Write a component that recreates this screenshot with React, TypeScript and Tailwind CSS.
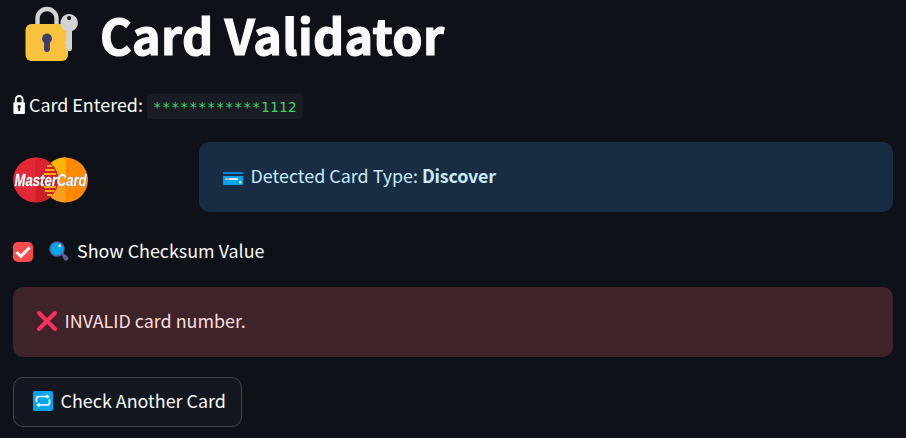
import React from "react";

const LockWithKey = () => (
  <svg width="54" height="57" viewBox="0 0 54 57" className="block shrink-0">
    <path d="M12.500 20V12.500a9.500 9.500 0 0 1 19 0v7.500" fill="none" stroke="#d3d3d3" strokeWidth="4.400" />
    <rect x=".5" y="18" width="42.500" height="37" rx="6" fill="#f9c23c" />
    <path d="M22 27.500a5 5 0 0 1 2.900 9v6.600a2.900 2.900 0 0 1-5.800 0v-6.600a5 5 0 0 1 2.900-9Z" fill="#433b6b" />
    <path
      fillRule="evenodd"
      d="M44.200 8a8.800 8.800 0 0 1 2.800 17.100V43a2.600 2.600 0 0 1-2.600 2.200c-.9 0-1.600-.4-2.200-1.100l-1.300-1.500c-.8-1-.6-1.800.4-2.800.5-.5.5-1 0-1.500l-.9-.9c-.6-.7-.6-1.500 0-2.100l.9-1.200v-9A8.800 8.800 0 0 1 44.200 8Zm0 2a2.100 2.100 0 1 0 0 4.200 2.100 2.100 0 0 0 0-4.200Z"
      fill="#d3d3d3"
    />
  </svg>
);

const SmallLock = () => (
  <svg width="13" height="20" viewBox="0 0 13 20" className="block shrink-0">
    <path d="M2.800 9V4.500a3.400 3.500 0 0 1 6.800 0V9" fill="none" stroke="#fafafa" strokeWidth="1.900" />
    <rect x=".4" y="7.300" width="11.500" height="11.700" rx="1" fill="#fafafa" />
    <path d="M6.200 10a1.700 1.700 0 0 1 .9 3.100v3H5.300v-3a1.700 1.700 0 0 1 .9-3.100Z" fill="#0e1117" />
  </svg>
);

const MasterCardLogo = () => (
  <svg width="76" height="46" viewBox="0 0 76 46" className="block shrink-0 overflow-visible">
    <circle cx="52.500" cy="23" r="22.500" fill="#ff8a00" />
    <path d="M52.500 .5a22.500 22.500 0 0 0 0 45Z" fill="#f99d1c" />
    <path d="M37.500 6.200 52.500 23V.5A22.500 22.500 0 0 0 37.500 6.200Z" fill="#fcb600" />
    <circle cx="22.700" cy="23" r="22.500" fill="#e52836" />
    <path d="M22.700 .5a22.500 22.500 0 0 1 0 45Z" fill="#cb2026" />
    <path d="M22.700 .5A22.500 22.500 0 0 1 39 7.500L22.700 23Z" fill="#d92230" />
    <path d="M34 9h5.500M32 13h9.500M31 17h12M31 30h12M32 34h9.500M34 38h5.500" stroke="#fcae10" strokeWidth="1.900" />
    <text
      x="1.600"
      y="28.500"
      textLength="72"
      lengthAdjust="spacingAndGlyphs"
      fill="#fff"
      stroke="#fff"
      strokeWidth=".3"
      className="font-['Liberation_Sans',Arial,sans-serif] text-[16px] font-bold italic drop-shadow-[0.6px_0.8px_0.3px_#5c1c1c]"
    >
      MasterCard
    </text>
  </svg>
);

const CreditCard = () => (
  <svg width="20" height="20" viewBox="0 0 20 20" className="mt-1 block shrink-0">
    <rect y="3" width="20" height="13" rx="1.200" fill="#00a6ed" />
    <path d="M0 4.200Q0 3 1.200 3h17.600Q20 3 20 4.200v.8H0Z" fill="#0084ce" />
    <path d="M0 5h20v2H0Z" fill="#212b52" />
    <path d="M2 9h13v2H2Z" fill="#e6e6e6" />
    <path d="M2 9h5l-1 2H2Z" fill="#b4acbc" />
    <rect x="16" y="12" width="2.500" height="2.500" rx=".6" fill="#f9e64d" />
  </svg>
);

const Magnifier = () => (
  <svg width="20" height="20" viewBox="0 0 20 20" className="block shrink-0">
    <path d="m11.500 12 1.300-1.300 5.800 5a2.300 2.300 0 0 1-3.300 3.300Z" fill="#635994" />
    <circle cx="8" cy="8" r="7.100" fill="#00a6ed" stroke="#635994" strokeWidth="1.300" />
    <circle cx="10.700" cy="4.700" r="1.200" fill="#fff" />
  </svg>
);

const Cross = () => (
  <svg width="20" height="20" viewBox="0 0 20 20" className="block shrink-0">
    <path d="m2 2 16 16M18 2 2 18" stroke="#f92f60" strokeWidth="4" strokeLinecap="round" />
  </svg>
);

const Repeat = () => (
  <svg width="20" height="20" viewBox="0 0 20 20" className="block shrink-0">
    <rect width="20" height="20" rx="2" fill="#00a6ed" />
    <path d="M3.500 10.500V8Q3.500 5.500 6 5.500H14.500M16.500 8.500v3q0 2.500-2.500 2.500H6" fill="none" stroke="#fff" strokeWidth="1.700" strokeLinecap="round" />
    <path d="m13.800 3.500 2.700 2-2.700 2ZM6.200 12 3.500 14l2.700 2Z" fill="#fff" stroke="#fff" strokeWidth=".5" strokeLinejoin="round" />
  </svg>
);

export default function App() {
  return (
    <main className="h-[438px] w-full overflow-hidden bg-[#0e1117] px-[13px] pt-[6px] font-['Noto_Sans_CJK_SC',sans-serif] text-[17.900px] leading-[30px] whitespace-nowrap text-[#fafafa]">
      <header className="flex h-[57px] items-center pl-3">
        <LockWithKey />
        <h1 className="ml-[21px] text-[48.500px] leading-[57px] font-bold tracking-[0.300px] [-webkit-text-stroke:1.200px_#fafafa]">Card Validator</h1>
      </header>

      <p className="mt-[27px] flex h-[30px] items-center">
        <SmallLock />
        <span className="ml-[3px] pb-[2px]">Card Entered:</span>
        <code className="mt-[2px] ml-1 flex h-[25px] items-center rounded bg-[#1a1c24] px-[6px] pt-[2px] font-['DejaVu_Sans_Mono',monospace] text-[14px] leading-[22px] tracking-[0.570px] text-[#3dd56d]">************1112</code>
      </p>

      <div className="mt-[22px] flex h-[70px]">
        <div className="w-[186px] shrink-0 pt-[15px]">
          <MasterCardLogo />
        </div>
        <div className="flex grow items-center rounded-[10px] bg-[#182d43] pl-[23.500px] text-[#c7ebff]">
          <CreditCard />
          <span className="ml-2 pb-[4px]">Detected Card Type: <strong className="font-bold tracking-[-0.200px]">Discover</strong></span>
        </div>
      </div>

      <label className="mt-[25px] flex h-[30px] items-center">
        <span className="flex size-5 items-center justify-center rounded-[5px] bg-[#ff4b4b]">
          <svg width="16" height="14" viewBox="0 0 16 14">
            <path d="m1.500 7 4.300 4.300L14.500 2.500" fill="none" stroke="#fafafa" strokeWidth="3" />
          </svg>
        </span>
        <span className="mb-[2px] ml-4"><Magnifier /></span>
        <span className="ml-2 pb-[4px]">Show Checksum Value</span>
      </label>

      <div className="mt-[20px] flex h-[70px] items-center rounded-[10px] bg-[#3e2428] pl-[23.500px] text-[#ffdede]">
        <span className="mb-[2px]"><Cross /></span>
        <span className="ml-2 pb-[4px]">INVALID card number.</span>
      </div>

      <button className="mt-5 flex h-[50px] w-[229px] items-center rounded-[10px] border border-[#41444c] bg-[#131720] pl-[18.600px]">
        <span className="mb-[2px]"><Repeat /></span>
        <span className="ml-2 pb-[4px]">Check Another Card</span>
      </button>
    </main>
  );
}
